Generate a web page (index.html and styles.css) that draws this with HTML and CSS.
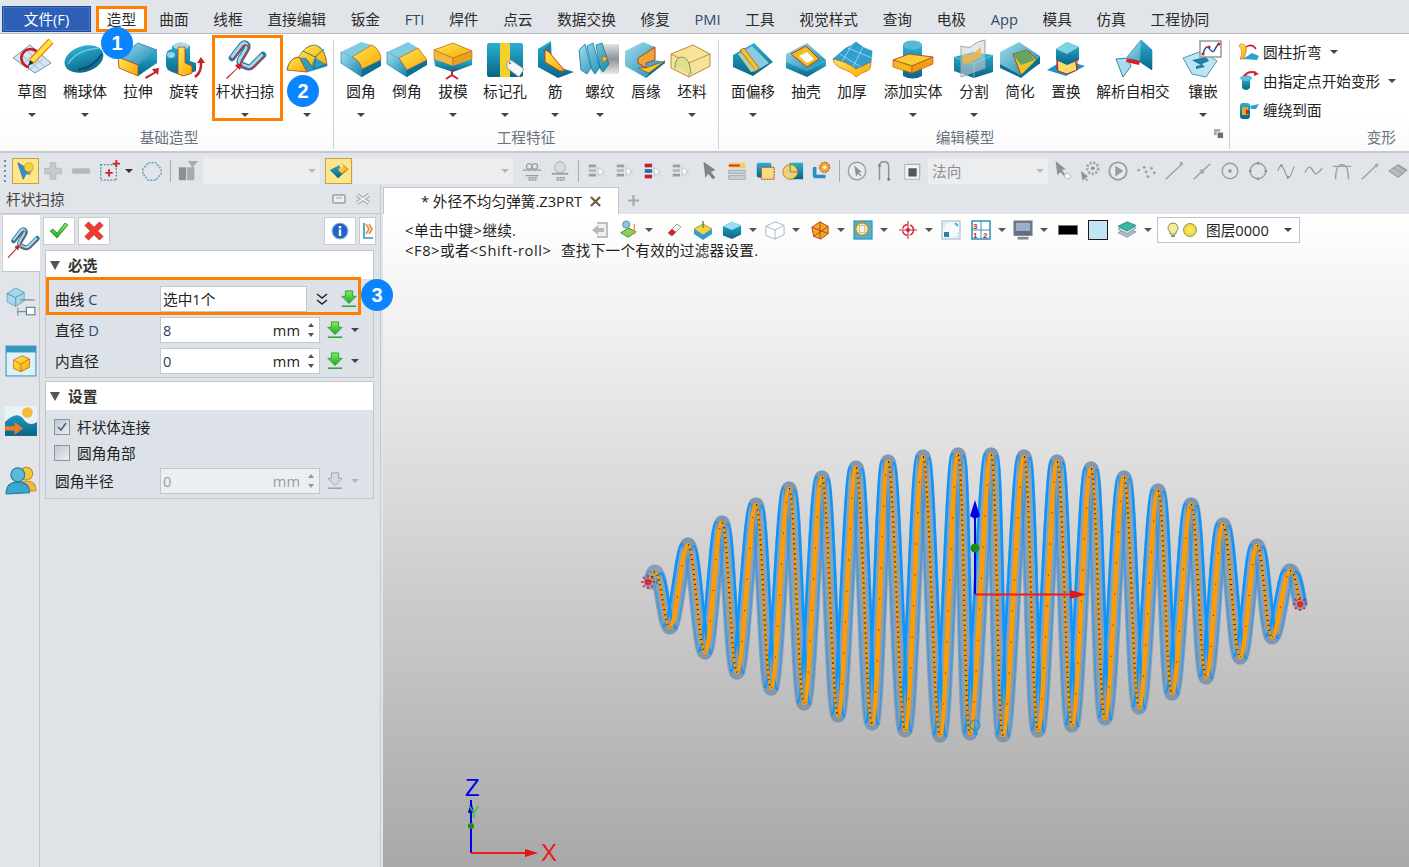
FILE: index.html
```html
<!DOCTYPE html>
<html lang="zh-CN">
<head>
<meta charset="utf-8">
<title>杆状扫掠</title>
<link rel="stylesheet" href="styles.css">
</head>
<body>
<svg class="defs" aria-hidden="true">
  <defs>
    <linearGradient id="t" x1="0" y1="0" x2="1" y2="1"><stop offset="0" stop-color="#a5deee"/><stop offset="1" stop-color="#0f86ad"/></linearGradient>
    <linearGradient id="d" x1="0" y1="0" x2="0" y2="1"><stop offset="0" stop-color="#2ab0d4"/><stop offset="1" stop-color="#0a6485"/></linearGradient>
    <linearGradient id="y" x1="0" y1="0" x2="1" y2="1"><stop offset="0" stop-color="#ffe85a"/><stop offset="1" stop-color="#f7a900"/></linearGradient>
    <linearGradient id="g" x1="0" y1="0" x2="0" y2="1"><stop offset="0" stop-color="#7df05a"/><stop offset="1" stop-color="#22a52c"/></linearGradient>
    <linearGradient id="m" x1="0" y1="0" x2="0" y2="1"><stop offset="0" stop-color="#dfe3e6"/><stop offset=".5" stop-color="#8d9296"/><stop offset="1" stop-color="#e6e8ea"/></linearGradient>
    <symbol id="gd" viewBox="0 0 20 20"><path d="M6 1h8v6h4l-8 8-8-8h4z" fill="url(#g)" stroke="#2b9a35"/><path d="M2 18h16" stroke="#2b9a35" stroke-width="1.6"/></symbol>
    <symbol id="gdo" viewBox="0 0 20 20"><path d="M6 1h8v6h4l-8 8-8-8h4z" fill="#d8dbde" stroke="#9a9ea2"/><path d="M2 18h16" stroke="#9a9ea2" stroke-width="1.6"/></symbol>
    <symbol id="lst" viewBox="0 0 24 24"><rect x="3" y="5" width="8" height="3" fill="#9a9ea2"/><rect x="3" y="10" width="8" height="3" fill="#b4b8bb"/><rect x="3" y="15" width="8" height="3" fill="#9a9ea2"/><path d="M13 8l1 9 2-2 3 3 1-1-3-3 3-1z" fill="#fff" stroke="#a9adb1" stroke-width=".7"/></symbol>
  </defs>
</svg>

<header class="menubar">
  <div class="filebtn">文件(F)</div>
  <div class="tab tab-on">造型<span class="badge b1">1</span></div>
  <div class="tab">曲面</div><div class="tab">线框</div><div class="tab">直接编辑</div><div class="tab">钣金</div>
  <div class="tab lat">FTI</div><div class="tab">焊件</div><div class="tab">点云</div><div class="tab">数据交换</div><div class="tab">修复</div>
  <div class="tab lat">PMI</div><div class="tab">工具</div><div class="tab">视觉样式</div><div class="tab">查询</div><div class="tab">电极</div>
  <div class="tab lat">App</div><div class="tab">模具</div><div class="tab">仿真</div><div class="tab">工程协同</div>
</header>

<section class="ribbon">
  <div class="grp g1">
    <div class="btns">
      <div class="rb w46"><svg class="ri" viewBox="9 38 46 44"><path d="M13 58l17-13 21 18-16 10z" fill="#d4e6f2" stroke="#6f97b3"/><path d="M19 53l20 16M25 49l19 17M20 66l16-12M27 71l16-12" stroke="#8fb3ca" fill="none" stroke-width=".8"/><path d="M37 52A9 9 0 1 0 29 67" fill="none" stroke="#c4202a" stroke-width="2.6"/><path d="M32 61l19-20" stroke="#e98c00" stroke-width="7"/><path d="M32 61l19-20" stroke="#ffdf4a" stroke-width="4.5"/><path d="M28 66l2-6 4 3z" fill="#333"/></svg><span>草图</span><i class="car"></i></div>
      <div class="rb w60"><svg class="ri" viewBox="62 38 46 44"><ellipse cx="84" cy="59" rx="20" ry="13" transform="rotate(-18 84 59)" fill="url(#d)"/><path d="M68 64Q76 50 99 48" stroke="#6cc7df" stroke-width="1.400" fill="none"/><path d="M78 70Q93 68 102 54" stroke="#0a4d68" stroke-width="2" fill="none"/></svg><span>椭球体</span><i class="car"></i></div>
      <div class="rb w46"><svg class="ri" viewBox="115 38 46 44"><path d="M118 57l20-14 19 7-19 15z" fill="url(#t)" stroke="#0b7497" stroke-width=".7"/><path d="M118 57l20 8v11l-19-8z" fill="url(#y)" stroke="#c43a1c" stroke-width=".8"/><path d="M138 65l19-15v13l-19 13z" fill="url(#d)"/><path d="M145 77l9-5-2-3 7-1-1 7-2-2-10 6z" fill="#c8202a"/></svg><span>拉伸</span></div>
      <div class="rb w46"><svg class="ri" viewBox="161 38 46 44"><path d="M166 56q0-6 6-7v-3q9-7 18 0v15l6 2v8l-13 5-11-4q-6-2-6-7z" fill="url(#d)"/><ellipse cx="181" cy="46" rx="8" ry="3.500" fill="#a3def0"/><ellipse cx="171" cy="55" rx="4" ry="3" fill="#8fd6ea"/><path d="M178 47h7v16l7 3v7l-8 3-6-2z" fill="url(#y)" stroke="#c43a1c" stroke-width=".8"/><path d="M195 77q7-5 6-15" fill="none" stroke="#c8202a" stroke-width="2.400"/><path d="M197 63l4-6 4 6z" fill="#c8202a"/></svg><span>旋转</span></div>
      <div class="rb w76"><svg class="ri" viewBox="222 38 46 44"><path d="M232 58L242 45Q245 42 247 45Q248 47 246 50L240 60Q239 63 242 65L247 67Q250 68 252 66L263 55" fill="none" stroke="#1f7ea3" stroke-width="6.500" stroke-linecap="round"/><path d="M231.500 57.500L241.500 44.500Q244.500 41.500 246.500 44.500Q247.500 46.500 245.500 49.500L239.500 59.500Q238.500 62.500 241.500 64.500L246.500 66.500Q249.500 67.500 251.500 65.500L262.500 54.500" fill="none" stroke="#9fdcec" stroke-width="3"/><path d="M233 59.500L243 46.500Q246 43.500 248 46.500Q249 48.500 247 51.500L241 61.500Q240 64.500 243 66.500L248 68.500Q251 69.500 253 67.500L264 56.500" fill="none" stroke="#d8283a" stroke-width="1.300"/><path d="M226 78l11-10-2-3 7-2-2 7-2-2-11 11z" fill="#c8202a"/></svg><span>杆状扫掠</span><i class="car"></i><b class="hl hl-sweep"></b></div>
      <div class="rb w48"><svg class="ri" viewBox="284 38 46 44"><path d="M287 70q2-12 12-13 6-12 16-12 11 2 12 21l-20 6-8-3z" fill="#2d9dc2" stroke="#1b6f90" stroke-width=".6"/><path d="M298 58q6-12 17-13 10 3 12 20l-12-7-4 9-5-9z" fill="url(#y)" stroke="#8c6b2e" stroke-width=".5"/><path d="M287 70q2-12 12-13l8 15z" fill="url(#y)" stroke="#c43a1c" stroke-width=".8"/><path d="M316 56l-2 13 13-5M307 60l7 9M303 51l12 6 9-8" fill="none" stroke="#1b6f90" stroke-width=".9"/></svg><span class="nolabel"></span><i class="car"></i><span class="badge b2">2</span></div>
    </div>
    <div class="gt">基础造型</div>
  </div>
  <i class="vsep"></i>
  <div class="grp g2">
    <div class="btns">
      <div class="rb w46"><svg class="ri" viewBox="338 38 46 44"><path d="M341 52l11 5q9 4 10 12v8l-21-14z" fill="url(#t)" stroke="#0b7497" stroke-width=".6"/><path d="M341 52l20-10 11 3-20 12z" fill="#7fcbe2"/><path d="M352 57l20-12q9 5 9 15l-19 9q-1-8-10-12z" fill="url(#y)" stroke="#c4651c" stroke-width=".8"/><path d="M362 69l19-9v6l-19 11z" fill="#0c7095"/></svg><span>圆角</span><i class="car"></i></div>
      <div class="rb w46"><svg class="ri" viewBox="384 38 46 44"><path d="M387 52l12 6 8 12v7l-20-13z" fill="url(#t)" stroke="#0b7497" stroke-width=".6"/><path d="M387 52l21-10 10 6-19 10z" fill="#7fcbe2"/><path d="M399 58l19-10 9 12-20 10z" fill="url(#y)" stroke="#c4651c" stroke-width=".8"/><path d="M407 70l20-10v5l-20 12z" fill="#0c7095"/></svg><span>倒角</span></div>
      <div class="rb w46"><svg class="ri" viewBox="430 38 46 44"><path d="M434 50l19-7 19 8-19 7z" fill="url(#y)" stroke="#c4651c" stroke-width=".8"/><path d="M434 50l19 8v8l-19-6z" fill="#f4b83a" stroke="#c4651c" stroke-width=".6"/><path d="M453 58l19-7v9l-19 6z" fill="#e8a020" stroke="#c4651c" stroke-width=".6"/><path d="M434 59l19 7 19-7v6l-19 7-18-6z" fill="url(#d)"/><path d="M452 70v5l-6 4M452 75l6 4" stroke="#c8202a" stroke-width="2" fill="none"/></svg><span>拔模</span><i class="car"></i></div>
      <div class="rb w58"><svg class="ri" viewBox="482 38 46 44"><rect x="487" y="43" width="36" height="34" rx="2" fill="url(#d)"/><rect x="500" y="43" width="10" height="34" fill="#f5cf2a"/><path d="M507 62l4-2 13 9-5 8-12-9z" fill="#f4f6f7" stroke="#8a9096" stroke-width=".8"/><circle cx="510" cy="63" r="1" fill="#666"/></svg><span>标记孔</span><i class="car"></i></div>
      <div class="rb w42"><svg class="ri" viewBox="532 38 46 44"><path d="M538 49l13-8 1 24 22 7-16 6-20-11z" fill="url(#d)"/><path d="M543 50l8-7v24z" fill="#1e7f9f"/><path d="M545 50l4 2 16 19h-5l-15-9z" fill="url(#y)" stroke="#c4451c"/></svg><span>筋</span><i class="car"></i></div>
      <div class="rb w48"><svg class="ri" viewBox="577 38 46 44"><rect x="600" y="44" width="19" height="30" fill="url(#m)"/><path d="M579 50l6-6 6 24-4 6-6-4zM587 46l6-3 7 24-5 7-3-4zM596 45l6-2 7 21-6 8-3-4z" fill="url(#t)" stroke="#0f7aa0" stroke-width=".8"/><path d="M602 56l6 2-5 5z" fill="#f6c01e" stroke="#c4451c" stroke-width=".6"/></svg><span>螺纹</span><i class="car"></i></div>
      <div class="rb w44"><svg class="ri" viewBox="623 38 46 44"><path d="M625 51l18-9 12 5-1 13 11 2-19 16-21-12z" fill="url(#t)"/><path d="M638 58l17-11v13l-9 3v5l-8-5z" fill="#e8a53a" stroke="#b3400f"/><path d="M646 68l19-7-16 12-11-5z" fill="url(#y)" stroke="#b3400f" stroke-width=".7"/><path d="M646 78l19-15v-2l-16 12z" fill="#0c7095"/></svg><span>唇缘</span></div>
      <div class="rb w48"><svg class="ri" viewBox="669 38 46 44"><path d="M671 54l22-9 17 9v12l-21 11-18-9z" fill="#f5e39a" stroke="#b8893c"/><path d="M671 54l18 9 21-9M689 63v14" fill="none" stroke="#b8893c" stroke-width=".9"/><path d="M675 68q0-11 7-11 8 1 9 17" fill="#e3df90" stroke="#7d9a5a"/></svg><span>坯料</span><i class="car"></i></div>
    </div>
    <div class="gt">工程特征</div>
  </div>
  <i class="vsep"></i>
  <div class="grp g3">
    <div class="btns">
      <div class="rb w60"><svg class="ri" viewBox="730 38 46 44"><path d="M733 55l21-12 19 19-20 14-20-9z" fill="url(#d)"/><path d="M738 54l14-8 17 17-13 8z" fill="#8ccbdf"/><path d="M740 50l16 21 3-3-15-20z" fill="#f2c62a" stroke="#b3400f" stroke-width=".7"/><path d="M738 54l3-1 15 18-5 1z" fill="#b8cf9a"/></svg><span>面偏移</span><i class="car"></i></div>
      <div class="rb w46"><svg class="ri" viewBox="783 38 46 44"><path d="M786 54l21-11 19 17-19 11-21-8z" fill="url(#t)"/><path d="M791 54l15-8 13 13-12 8z" fill="#f3bc24" stroke="#b3400f"/><path d="M799 56l8-4 7 7-7 4z" fill="#fff"/><path d="M786 62l21 9 19-11v6l-19 11-21-9z" fill="url(#d)"/></svg><span>抽壳</span></div>
      <div class="rb w46"><svg class="ri" viewBox="829 38 46 44"><path d="M833 59q7-6 13-11 7-3 10-6 8 7 16 9l-1 11q-7 4-15 7-9-7-23-10z" fill="#2f9fd0" stroke="#1a789e" stroke-width=".6"/><path d="M840 54l24 15M848 48l24 10M853 43l-12 20M863 47l-10 20" stroke="#bfe3f0" stroke-width=".7" fill="none"/><path d="M833 59q14 3 23 10 8-3 15-7 0 8-4 9-6 2-11 6-4-5-13-8-9-3-10-10z" fill="url(#y)" stroke="#c4651c" stroke-width=".7"/></svg><span>加厚</span></div>
      <div class="rb w76"><svg class="ri" viewBox="890 38 46 44"><path d="M903 45v31q10 5 19 0V45z" fill="url(#d)"/><ellipse cx="912.500" cy="45" rx="9.500" ry="4.500" fill="#58b8d5"/><path d="M893 60l16-6 24 3-21 9z" fill="#f5cf35" stroke="#c04a22"/><path d="M893 60l19 6v7l-19-6z" fill="#f7b716" stroke="#c04a22" stroke-width=".7"/><path d="M912 66l21-9v7l-21 9z" fill="#ee9e12" stroke="#c04a22" stroke-width=".7"/></svg><span>添加实体</span><i class="car"></i></div>
      <div class="rb w46"><svg class="ri" viewBox="951 38 46 44"><path d="M954 57l19-5 20 3v17l-19 6-20-7z" fill="url(#d)"/><path d="M954 57l19 7 20-9M974 64v14" stroke="#7dcbe2" fill="none" stroke-width=".8"/><path d="M961 46q10 3 12-1 5-4 12-5v28l-24 9z" fill="#cfd6d8" fill-opacity=".55" stroke="#9aa3a8"/><path d="M963 54q7 3 11-1l7-6v9l-9 6-9 3z" fill="#f6b63c" fill-opacity=".85"/></svg><span>分割</span><i class="car"></i></div>
      <div class="rb w46"><svg class="ri" viewBox="997 38 46 44"><path d="M1000 52l19-10 21 14-19 19-21-11z" fill="url(#t)"/><path d="M1013 54l14-4 13 13-19 12z" fill="#f2c22a" stroke="#b3400f"/><path d="M1013 54l14-4 8 10-14 5z" fill="#64a65f"/><path d="M1000 64l21 11 19-19v7l-19 15-21-10z" fill="#0c7095"/></svg><span>简化</span></div>
      <div class="rb w46"><svg class="ri" viewBox="1043 38 46 44"><path d="M1047 70l17-10 21 6-19 10z" fill="#1d93bf"/><path d="M1057 61l18-3 2 12-10 4-9-3z" fill="#f7dc68" stroke="#c8202a"/><path d="M1056 49l11-7 12 5v13l-12 5-11-5z" fill="url(#d)"/><path d="M1056 49l11 5 12-7-12-5z" fill="#7fd1e6"/><path d="M1057 60v10M1077 59v11" stroke="#c8202a"/></svg><span>置换</span></div>
      <div class="rb w88"><svg class="ri" viewBox="1110 38 46 44"><path d="M1116 59l11-1 4 8-8 11z" fill="#a9dcec" stroke="#2a86a8"/><path d="M1127 57l14-17 11 10v20l-12-8z" fill="url(#t)" stroke="#0f7aa0" stroke-width=".6"/><path d="M1141 40l11 10v20l-12-8z" fill="url(#d)"/><path d="M1127 58l13 3-1 4-13-3z" fill="#d8202a"/></svg><span>解析自相交</span></div>
      <div class="rb w52"><svg class="ri" viewBox="1180 38 46 44"><path d="M1183 58l19-7 15 10-11 16-14-3z" fill="#bfe3f0" stroke="#3c9dc4"/><path d="M1192 60l14-3 3 4-7 3 3 3-9 2v-3l5-1-6-3z" fill="#1b7fa6"/><rect x="1200" y="41" width="21" height="16" fill="#fff" stroke="#8d9296" stroke-width="1.400"/><path d="M1203 54q3-10 6-6 3 5 5 3 2-4 5-8" stroke="#1a4c9a" stroke-width="1.400" fill="none"/><circle cx="1203" cy="54" r="1.600" fill="#c8202a"/><circle cx="1209" cy="47" r="1.600" fill="#c8202a"/><circle cx="1219" cy="44" r="1.600" fill="#c8202a"/></svg><span>镶嵌</span><i class="car"></i></div>
    </div>
    <div class="gt gt3">编辑模型<svg class="launch" viewBox="0 0 12 12"><path d="M1 1h7v3H4v4H1z" fill="#a9adb1"/><path d="M5 5h6v6H5z" fill="#6b7075"/></svg></div>
  </div>
  <i class="vsep"></i>
  <div class="grp g4">
    <div class="srow"><svg class="si" viewBox="0 0 22 22"><path d="M2 3q8 0 6 8l-2 7H2q4-8-1-13z" fill="url(#y)" stroke="#c4651c" stroke-width=".6"/><path d="M5 18l9-6 7 3-2 4z" fill="#2ba3cc"/><path d="M8 6q6-4 10 2" stroke="#c8202a" fill="none" stroke-width="1.500"/></svg><span>圆柱折弯</span><i class="car sc1"></i></div>
    <div class="srow"><svg class="si" viewBox="0 0 22 22"><path d="M4 8v10q4 4 8 0V8z" fill="url(#d)"/><ellipse cx="8" cy="8" rx="6" ry="3" fill="#63bcd8"/><path d="M6 6q5-6 12-3" stroke="#d0232c" fill="none" stroke-width="2"/><path d="M16 1l5 3-5 2z" fill="#d0232c"/></svg><span>由指定点开始变形</span><i class="car sc1"></i></div>
    <div class="srow"><svg class="si" viewBox="0 0 22 22"><rect x="2" y="4" width="10" height="16" rx="3" fill="url(#d)"/><rect x="4" y="8" width="6" height="8" fill="#e6a82a"/><path d="M8 10l4 3-4 3z" fill="#c8202a"/><path d="M12 7l9-2-3 5h-5z" fill="#2ba3cc"/></svg><span>缠绕到面</span></div>
    <div class="gt gt4">变形</div>
  </div>
</section>

<section class="filterbar">
  <i class="grip"></i>
  <div class="fsel"><svg viewBox="0 0 24 24"><path d="M3 3l6 18 3-6 6-3z" fill="#2e8fd2" stroke="#1c5f9a" stroke-width=".7"/><circle cx="15" cy="8" r="5" fill="#f3d13a" stroke="#b98e1f" stroke-width=".7"/><rect x="13" y="13" width="4" height="3" fill="#888"/></svg></div>
  <div class="fc w28"><svg viewBox="0 0 24 24"><path d="M9 3h6v6h6v6h-6v6H9v-6H3V9h6z" fill="#c6cacd" stroke="#b1b5b8"/></svg></div>
  <div class="fc w28"><svg viewBox="0 0 24 24"><rect x="2" y="9" width="20" height="6" rx="2" fill="#b5b9bc"/></svg></div>
  <div class="fc w28"><svg viewBox="0 0 24 24"><rect x="3" y="5" width="17" height="17" fill="none" stroke="#4f90a8" stroke-width="1.500" stroke-dasharray="2 1.500"/><path d="M8 14h8M12 10v8" stroke="#d8202a" stroke-width="2"/><path d="M16 4h8M20 0v8" stroke="#d8202a" stroke-width="2"/></svg></div>
  <i class="car fcar"></i>
  <div class="fc w28 dotc"><svg viewBox="0 0 24 24"><path d="M8 3h8l6 7v5l-6 7H8l-6-7v-5z" fill="none" stroke="#62a4bd" stroke-width="1.800" stroke-dasharray="2 1.500"/></svg></div>
  <i class="tsep s1"></i>
  <div class="fc w24"><svg viewBox="0 0 24 24"><rect x="2" y="8" width="8" height="14" fill="#8b9094"/><rect x="11" y="8" width="8" height="14" fill="#a6aaad"/><path d="M12 1h11l-5 6v6h-2V7z" fill="#a7abaf"/></svg></div>
  <div class="field f1"><i class="car gcar"></i></div>
  <div class="fsel sel2"><svg viewBox="0 0 24 24"><path d="M2 11l13-7 7 6-11 10z" fill="url(#d)"/><path d="M11 11l4-7 7 6-7 5z" fill="url(#y)" stroke="#c4651c" stroke-width=".7"/><path d="M12 5h5l-3 3z" fill="#fff"/></svg></div>
  <div class="field f2"><i class="car gcar"></i></div>
  <div class="fc w28"><svg viewBox="0 0 24 24"><path d="M2 11h20M5 17h14" stroke="#9a9ea2" stroke-width="1.500"/><circle cx="9" cy="7" r="3" fill="none" stroke="#9a9ea2" stroke-width="1.300"/><circle cx="15" cy="7" r="3" fill="none" stroke="#9a9ea2" stroke-width="1.300"/><text x="8" y="23" class="tiny">REF</text></svg></div>
  <div class="fc w28"><svg viewBox="0 0 24 24"><circle cx="12" cy="8" r="6" fill="#d8dbde" stroke="#a6aaad"/><path d="M3 15h18" stroke="#9a9ea2" stroke-width="2"/><text x="8" y="23" class="tiny">REF</text></svg></div>
  <i class="tsep s2"></i>
  <div class="fc w28"><svg viewBox="0 0 24 24"><use href="#lst"/></svg></div>
  <div class="fc w28"><svg viewBox="0 0 24 24"><use href="#lst"/></svg></div>
  <div class="fc w28"><svg viewBox="0 0 24 24"><rect x="3" y="4" width="8" height="4" fill="#c8202a"/><rect x="3" y="10" width="8" height="4" fill="#1f6fb0"/><rect x="3" y="16" width="8" height="4" fill="#c8202a"/><path d="M13 8l1 9 2-2 3 3 1-1-3-3 3-1z" fill="#fff" stroke="#a9adb1" stroke-width=".7"/></svg></div>
  <div class="fc w28"><svg viewBox="0 0 24 24"><use href="#lst"/></svg></div>
  <div class="fc w28"><svg viewBox="0 0 24 24"><path d="M6 2l2 18 3-5 5 6 3-2-5-6 5-2z" fill="#7d8388"/></svg></div>
  <div class="fc w28"><svg viewBox="0 0 24 24"><rect x="3" y="3" width="18" height="6" fill="#f6cf5a"/><path d="M3 6h12" stroke="#d0232c" stroke-width="2"/><rect x="3" y="11" width="18" height="4" fill="#c4cdd2" stroke="#88939a" stroke-width=".6"/><rect x="3" y="17" width="18" height="4" fill="#c4cdd2" stroke="#88939a" stroke-width=".6"/></svg></div>
  <div class="fc w28"><svg viewBox="0 0 24 24"><rect x="3" y="3" width="16" height="16" rx="2" fill="url(#d)"/><rect x="8" y="8" width="14" height="13" fill="#f6dc7a" stroke="#c8202a" stroke-dasharray="2 1"/></svg></div>
  <div class="fc w28"><svg viewBox="0 0 24 24"><rect x="8" y="3" width="15" height="18" fill="url(#d)"/><circle cx="9" cy="13" r="8" fill="#f4cf78" stroke="#b3802b"/><path d="M9 13V5M9 13h8" stroke="#7fa04f" stroke-width="1.500"/></svg></div>
  <div class="fc w28"><svg viewBox="0 0 24 24"><path d="M3 10q0-4 4-2v8h10v4H6q-3 0-3-3z" fill="#2b8fc4"/><circle cx="16" cy="8" r="5.500" fill="#f1a92a" stroke="#c8202a" stroke-dasharray="2 1"/><circle cx="16" cy="8" r="2" fill="#fff"/></svg></div>
  <i class="tsep s3"></i>
  <div class="fc w28"><svg viewBox="0 0 24 24"><circle cx="12" cy="12" r="9.500" fill="#e8eaec" stroke="#9a9ea2" stroke-width="1.500"/><path d="M9 6l2 12 2-3 3 3 1-1-3-3 3-1z" fill="#8b9094"/></svg></div>
  <div class="fc w28"><svg viewBox="0 0 24 24"><path d="M6 22V6q0-4 5-4 5 0 5 5v15" fill="none" stroke="#8d9296" stroke-width="1.600"/><circle cx="6" cy="6" r="1.500" fill="#777"/><circle cx="16" cy="21" r="1.500" fill="#777"/></svg></div>
  <div class="fc w28"><svg viewBox="0 0 24 24"><rect x="5" y="3" width="16" height="16" fill="#c9ccce" stroke="#e8eaec"/><rect x="3" y="5" width="16" height="16" fill="#f1f2f3" stroke="#aeb2b5"/><rect x="7" y="9" width="9" height="9" fill="#55595c"/></svg></div>
  <div class="field f3">法向<i class="car gcar"></i></div>
  <div class="fc w28"><svg viewBox="0 0 24 24"><path d="M5 1l2 16 3-4 5 5 1-1-4-6 4-1z" fill="#8b9094"/><path d="M14 17l4-3 4 4-4 3z" fill="#fff" stroke="#a9adb1"/></svg></div>
  <div class="fc w28"><svg viewBox="0 0 24 24"><circle cx="15" cy="9" r="6" fill="none" stroke="#a3a7aa" stroke-width="3" stroke-dasharray="2.500 1.500"/><circle cx="15" cy="9" r="2" fill="#8b9094"/><path d="M2 12l2 11 2-3 3 3 1-1-3-3 3-1z" fill="#8b9094"/></svg></div>
  <div class="fc w28"><svg viewBox="0 0 24 24"><circle cx="12" cy="12" r="9.500" fill="#e8eaec" stroke="#9a9ea2" stroke-width="2"/><path d="M9 6v12l9-6z" fill="#9a9ea2"/></svg></div>
  <div class="fc w28"><svg viewBox="0 0 24 24" fill="#9a9ea2"><circle cx="4" cy="11" r="1.500"/><circle cx="10" cy="8" r="1.500"/><circle cx="12" cy="13" r="1.500"/><circle cx="18" cy="9" r="1.500"/><circle cx="21" cy="14" r="1.500"/><circle cx="14" cy="18" r="1.500"/></svg></div>
  <div class="fc w28"><svg viewBox="0 0 24 24"><path d="M3 21L21 4" stroke="#9a9ea2" stroke-width="1.400"/><circle cx="20" cy="4" r="2" fill="#a7abaf"/></svg></div>
  <div class="fc w28"><svg viewBox="0 0 24 24"><path d="M3 21L21 4" stroke="#9a9ea2" stroke-width="1.400"/><circle cx="12" cy="12.500" r="2.500" fill="#a7abaf"/></svg></div>
  <div class="fc w28"><svg viewBox="0 0 24 24"><circle cx="12" cy="12" r="8.500" fill="none" stroke="#9a9ea2" stroke-width="1.500"/><circle cx="12" cy="12" r="1.800" fill="#8b9094"/></svg></div>
  <div class="fc w28"><svg viewBox="0 0 24 24"><circle cx="12" cy="12" r="8.500" fill="none" stroke="#9a9ea2" stroke-width="1.500"/><circle cx="12" cy="3.500" r="1.500" fill="#8b9094"/><circle cx="3.500" cy="12" r="1.500" fill="#8b9094"/><circle cx="20.500" cy="12" r="1.500" fill="#8b9094"/><circle cx="12" cy="20.500" r="1.500" fill="#8b9094"/></svg></div>
  <div class="fc w28"><svg viewBox="0 0 24 24"><path d="M3 12q3-8 5-5t4 9q3 5 5 1t4-10" fill="none" stroke="#9a9ea2" stroke-width="1.300"/><circle cx="7" cy="6" r="1.400" fill="#8b9094"/><circle cx="14" cy="19" r="1.400" fill="#8b9094"/></svg></div>
  <div class="fc w28"><svg viewBox="0 0 24 24"><path d="M2 14q4-9 7-5t4 6 8-6" fill="none" stroke="#9a9ea2" stroke-width="1.500"/></svg></div>
  <div class="fc w28"><svg viewBox="0 0 24 24"><path d="M5 21Q5 5 12 5t7 16M2 7h20" fill="none" stroke="#9a9ea2" stroke-width="1.500"/></svg></div>
  <div class="fc w28"><svg viewBox="0 0 24 24"><path d="M3 21L21 4" stroke="#9a9ea2" stroke-width="1.400"/><circle cx="19" cy="6" r="2" fill="#a7abaf"/><path d="M17 12l2 2" stroke="#9a9ea2"/></svg></div>
  <div class="fc w28"><svg viewBox="0 0 24 24"><path d="M2 12l10-7 10 6-10 8z" fill="#b7bbbe" stroke="#8b9094"/><path d="M7 8l10 7M12 6l8 6" stroke="#8b9094"/></svg></div>
</section>

<main class="work">
  <aside class="panel">
    <div class="phead"><span class="ptitle">杆状扫掠</span><svg class="pi1" viewBox="0 0 14 12"><rect x="1" y="2" width="12" height="8" rx="1" fill="#eef0f2" stroke="#9a9ea2" stroke-width="1.500"/><path d="M4 5h6" stroke="#9a9ea2"/></svg><svg class="pi2" viewBox="0 0 16 12"><path d="M2 2l12 8M14 2L2 10" stroke="#a9adb1" stroke-width="4"/><path d="M2 2l12 8M14 2L2 10" stroke="#eef0f2" stroke-width="1.600"/></svg></div>
    <div class="pbody">
      <nav class="strip">
        <div class="st on"><svg viewBox="222 40 42 42"><path d="M232 58L242 45Q245 42 247 45Q248 47 246 50L240 60Q239 63 242 65L247 67Q250 68 252 66L263 55" fill="none" stroke="#1f7ea3" stroke-width="6.500" stroke-linecap="round"/><path d="M231.500 57.500L241.500 44.500Q244.500 41.500 246.500 44.500Q247.500 46.500 245.500 49.500L239.500 59.500Q238.500 62.500 241.500 64.500L246.500 66.500Q249.500 67.500 251.500 65.500L262.500 54.500" fill="none" stroke="#9fdcec" stroke-width="3"/><path d="M233 59.500L243 46.500Q246 43.500 248 46.500Q249 48.500 247 51.500L241 61.500Q240 64.500 243 66.500L248 68.500Q251 69.500 253 67.500L264 56.500" fill="none" stroke="#d8283a" stroke-width="1.300"/><path d="M224 80l11-12-2-2 7-3-2 8-2-2-11 12z" fill="#c8202a"/></svg></div>
        <div class="st"><svg viewBox="0 0 30 30"><path d="M2 7l8-5 8 4v8l-8 5-8-4z" fill="#a7d7ea" stroke="#7fb0c6"/><path d="M2 7l8 4 8-5M10 11v8" stroke="#5f9eb8" fill="none"/><path d="M14 13h14M12 20v8M12 24h8" stroke="#7c8a94" fill="none"/><rect x="20" y="20" width="8" height="7" fill="#fff" stroke="#5f7688"/></svg></div>
        <div class="st"><svg viewBox="0 0 30 30"><rect x="1" y="1" width="28" height="28" fill="#dff1f7" stroke="#3798bd"/><rect x="1" y="1" width="28" height="6" fill="#3798bd"/><path d="M8 14l8-4 7 3v8l-8 4-7-3z" fill="url(#y)" stroke="#c4651c" stroke-width=".7"/><path d="M8 14l7 4 8-5M15 18v7" stroke="#c4651c" fill="none" stroke-width=".7"/></svg></div>
        <div class="st"><svg viewBox="0 0 30 30"><rect x="0" y="1" width="30" height="28" fill="url(#d)"/><path d="M0 1h30v15q-7 5-13-3T0 16z" fill="#e8f3f8"/><circle cx="21" cy="7" r="5" fill="#f6b93a"/><path d="M0 20h9v-4l8 6-8 6v-4H0z" fill="#f17a2a"/></svg></div>
        <div class="st"><svg viewBox="0 0 30 30"><circle cx="20" cy="9" r="6" fill="#f4c63c" stroke="#c88b1c"/><path d="M9 26q2-10 11-10t9 9z" fill="#f4b63c" stroke="#c88b1c"/><circle cx="12" cy="10" r="6.500" fill="#5db8da" stroke="#1f7ea3"/><path d="M1 28q0-11 11-11t11 10z" fill="#3aa7cf" stroke="#1f7ea3"/></svg></div>
      </nav>
      <div class="pcontent">
        <div class="ptools">
          <div class="tb"><svg viewBox="0 0 22 18"><path d="M2 9l7 7L20 3l-3-2-8 10-4-4z" fill="url(#g)" stroke="#28902f" stroke-width=".8"/></svg></div>
          <div class="tb"><svg viewBox="0 0 22 22"><path d="M5 1l6 6 6-6 4 4-6 6 6 6-4 4-6-6-6 6-4-4 6-6-6-6z" fill="#ee3b30" stroke="#b8241c" stroke-width=".8"/></svg></div>
          <div class="tb tb-info"><svg viewBox="0 0 18 18"><circle cx="9" cy="9" r="8" fill="#1e63c8" stroke="#9fb9de" stroke-width="1.200"/><rect x="7.800" y="7.500" width="2.400" height="6.500" fill="#fff"/><rect x="7.800" y="4" width="2.400" height="2.400" fill="#fff"/></svg></div>
          <div class="tb tb-nar"><svg viewBox="0 0 12 18"><path d="M2 1v15h9" fill="none" stroke="#2b96c8" stroke-width="1.600"/><path d="M4 2l3 5-3 5M7 2l3 5-3 5" fill="none" stroke="#ea9340" stroke-width="1.800"/></svg></div>
        </div>

        <div class="sec">
          <div class="sh"><i class="tri"></i>必选</div>
          <div class="sb">
            <div class="row row-c">
              <label>曲线 <em>C</em></label>
              <div class="inp i147">选中1个</div>
              <svg class="chev" viewBox="0 0 14 14"><path d="M2 2l5 4 5-4M2 8l5 4 5-4" fill="none" stroke="#222" stroke-width="1.500"/></svg>
              <svg class="gd g-c"><use href="#gd"/></svg>
              <b class="hl hl-row"></b>
              <span class="badge b3">3</span>
            </div>
            <div class="row">
              <label>直径 <em>D</em></label>
              <div class="inp i160"><em class="v">8</em><span class="unit">mm</span><span class="spin"><i></i><i></i></span></div>
              <svg class="gd"><use href="#gd"/></svg><i class="car rc"></i>
            </div>
            <div class="row">
              <label>内直径</label>
              <div class="inp i160"><em class="v">0</em><span class="unit">mm</span><span class="spin"><i></i><i></i></span></div>
              <svg class="gd"><use href="#gd"/></svg><i class="car rc"></i>
            </div>
          </div>
        </div>

        <div class="sec">
          <div class="sh"><i class="tri"></i>设置</div>
          <div class="sb sb2">
            <div class="crow"><i class="cb"><svg viewBox="0 0 12 12"><path d="M2 6l3 3 5-7" fill="none" stroke="#44648a" stroke-width="1.600"/></svg></i>杆状体连接</div>
            <div class="crow"><i class="cb"></i>圆角角部</div>
            <div class="row dis">
              <label>圆角半径</label>
              <div class="inp i160"><em class="v">0</em><span class="unit">mm</span><span class="spin"><i></i><i></i></span></div>
              <svg class="gd"><use href="#gdo"/></svg><i class="car rc"></i>
            </div>
          </div>
        </div>
      </div>
    </div>
  </aside>

  <div class="main">
    <div class="doctabs">
      <div class="doctab">* 外径不均匀弹簧.Z3PRT<svg viewBox="0 0 12 12"><path d="M1 1l10 10M11 1L1 11" stroke="#6b5d3f" stroke-width="2.400"/></svg></div>
      <svg class="plus" viewBox="0 0 14 14"><path d="M7 1v12M1 7h12" stroke="#a7abaf" stroke-width="2.400"/></svg>
    </div>
    <div class="view">
      <svg class="scene" viewBox="383 214 1026 653" aria-hidden="true">
        <defs>
          <path id="dn" d="M651 582C652 574 654 572 655 572C661 572 664 627 670 627M688 545C694 545 699 652 705 652M722 523C728 523 731 672 737 672M756 505C762 505 765 688 771 688M789 489C795 489 798 703 804 703M822 478C828 478 832 715 838 715M856 468C862 468 866 723 872 723M888 462C894 462 899 730 905 730M923 457C929 457 934 735 940 735M958 455C964 455 964 733 970 733M991 455C997 455 997 735 1003 735M1024 457C1030 457 1032 730 1038 730M1057 462C1063 462 1066 725 1072 725M1091 469C1097 469 1099 718 1105 718M1124 478C1130 478 1133 707 1139 707M1158 491C1164 491 1166 693 1172 693M1191 505C1197 505 1200 677 1206 677M1223 525C1229 525 1234 657 1240 657M1257 546C1263 546 1266 637 1272 637M1290 571C1295 571 1297 590 1300 603"/>
          <path id="up" d="M670 627C676 627 682 545 688 545M705 652C711 652 716 523 722 523M737 672C743 672 750 505 756 505M771 688C777 688 783 489 789 489M804 703C810 703 816 478 822 478M838 715C844 715 850 468 856 468M872 723C878 723 882 462 888 462M905 730C911 730 917 457 923 457M940 735C946 735 952 455 958 455M970 733C976 733 985 455 991 455M1003 735C1009 735 1018 457 1024 457M1038 730C1044 730 1051 462 1057 462M1072 725C1078 725 1085 469 1091 469M1105 718C1111 718 1118 478 1124 478M1139 707C1145 707 1152 491 1158 491M1172 693C1178 693 1185 505 1191 505M1206 677C1212 677 1217 525 1223 525M1240 657C1246 657 1251 546 1257 546M1272 637C1278 637 1284 571 1290 571"/>
        </defs>
        <g class="sp-gray"><use href="#dn"/><use href="#up"/></g>
        <g class="sp-blue2"><use href="#dn" x="-5.500" y="-1"/><use href="#up" x="5.500" y="1"/></g>
        <g class="sp-blue"><use href="#dn" x="6" y="1"/><use href="#up" x="-6" y="-1"/></g>
        <use href="#up" class="sp-oup"/>
        <use href="#dn" class="sp-odn"/>
        <use href="#dn" class="sp-dot"/>
        <use href="#up" class="sp-dot2"/>
        <circle cx="975" cy="725" r="5" class="ring"/>
        <g class="star"><path d="M641 582h14M648 575v14M643 577l10 10M653 577l-10 10"/><path d="M1293 604h14M1300 597v14M1295 599l10 10M1305 599l-10 10"/></g>
        <path d="M975 594V512" stroke="#0000e6" stroke-width="2"/>
        <path d="M975 500l-5 16 5 3 5-3z" fill="#0000e6"/>
        <circle cx="975" cy="548" r="4.500" fill="#1c8a1c"/>
        <path d="M975 594.500H1070" stroke="#f01818" stroke-width="2"/>
        <path d="M1070 590v9l16-4.500z" fill="#e01515"/>
        <path d="M471 853V800" stroke="#0000f0" stroke-width="2"/>
        <path d="M471 800l-3 13h6z" fill="#0000f0"/>
        <circle cx="471" cy="826" r="3" fill="#1c8a1c"/>
        <path d="M471 853H525" stroke="#f01818" stroke-width="2"/>
        <path d="M525 849v8l13-4z" fill="#e01515"/>
        <text x="465" y="796" class="ax ax-z">Z</text>
        <text x="468" y="818" class="ax ax-y">Y</text>
        <text x="541" y="861" class="ax ax-x">X</text>
      </svg>
      <div class="prompt">
        <p><span class="lt">&lt;</span>单击中键<span class="lt">&gt;</span>继续.</p>
        <p><span class="lt">&lt;F8&gt;</span>或者<span class="lt lt2">&lt;Shift-roll&gt;&nbsp;</span>查找下一个有效的过滤器设置.</p>
      </div>
      <div class="vbar">
        <div class="vc w29"><svg viewBox="0 0 20 20"><path d="M7 3h10v14H7" fill="#eef0f1" stroke="#a9adb1" stroke-width="1.500"/><path d="M2 10l6-5v3h6v4H8v3z" fill="#b5b9bc"/></svg></div>
        <div class="vc w21 ml3"><svg viewBox="0 0 22 22"><circle cx="9" cy="5" r="4" fill="#8cc4dc" stroke="#5d8ca3"/><path d="M3 14l9-5 8 4-9 6z" fill="#8bcf5a" stroke="#3a8a2a"/><path d="M18 4v12" stroke="#e0a040" stroke-width="1.600"/></svg></div><i class="car vcar"></i>
        <div class="vc w29 ml7"><svg viewBox="0 0 20 20"><path d="M4 13L13 4l4 3-9 9z" fill="#f2f2f2" stroke="#a0a4a8"/><path d="M4 13l4-4 4 3-4 4z" fill="#d0232c"/></svg></div>
        <div class="vc w29"><svg viewBox="0 0 20 20"><path d="M1 9l9-5 9 5-9 6z" fill="#f6d24a" stroke="#c4951c"/><path d="M1 9l9 6v5l-9-6zM19 9l-9 6v5l9-6z" fill="#2ba3cc"/><path d="M10 1v7" stroke="#3a9a3a" stroke-width="1.400"/></svg></div>
        <div class="vc w21 ml4"><svg viewBox="0 0 22 22"><path d="M1 7l10-5 10 4v10l-10 5-10-4z" fill="url(#d)"/><path d="M1 7l10 4 10-5-10-4z" fill="#9cdcee"/></svg></div><i class="car vcar"></i>
        <div class="vc w21 ml8"><svg viewBox="0 0 22 22"><path d="M1 7l10-5 10 4v10l-10 5-10-4z" fill="#fff" stroke="#9ab2c0"/><path d="M1 7l10 4 10-5M11 11v10" fill="none" stroke="#9ab2c0"/></svg></div><i class="car vcar"></i>
        <div class="vc w21 ml10"><svg viewBox="0 0 22 22"><path d="M2 8l9-6 9 5v8l-8 6-8-3z" fill="#f2a52a" stroke="#b3400f"/><path d="M11 2v19M2 8l18 7M20 7L4 18" stroke="#b3400f" fill="none"/></svg></div><i class="car vcar"></i>
        <div class="vc w21 ml8"><svg viewBox="0 0 22 22"><rect x="1" y="1" width="20" height="20" fill="#4bb3d6" stroke="#2b86a8"/><circle cx="10" cy="10" r="7" fill="#f8e9a0" stroke="#b98e1f" stroke-width="1.600"/><rect x="7" y="6" width="6" height="8" fill="#eef2f4" stroke="#9aa3a8" stroke-width=".6"/></svg></div><i class="car vcar"></i>
        <div class="vc w21 ml10"><svg viewBox="0 0 22 22"><circle cx="11" cy="11" r="6" fill="none" stroke="#d0232c" stroke-width="1.600" stroke-dasharray="7 3"/><path d="M11 1v20M1 11h20" stroke="#d0232c" stroke-width="1.200"/><circle cx="11" cy="11" r="2.200" fill="#d0232c"/></svg></div><i class="car vcar"></i>
        <div class="vc w21 ml8"><svg viewBox="0 0 20 20"><rect x="1" y="1" width="18" height="18" fill="#f7fafb" stroke="#8fb6c6"/><path d="M3 8V3h5M17 12v5h-5" fill="none" stroke="#bcd" stroke-dasharray="2 1"/><rect x="3" y="12" width="5" height="5" fill="#2b7fa8"/><path d="M14 3l3 3" stroke="#4bb3d6" stroke-width="2"/></svg></div>
        <div class="vc w21 ml9"><svg viewBox="0 0 20 20"><rect x="1" y="1" width="18" height="18" fill="#fff" stroke="#3798bd" stroke-width="1.600"/><path d="M10 1v18M1 10h18" stroke="#3798bd"/><text x="2" y="9" class="tn">3</text><text x="2" y="18" class="tn">1</text><text x="12" y="18" class="tn">2</text></svg></div><i class="car vcar"></i>
        <div class="vc w21 ml7"><svg viewBox="0 0 22 22"><rect x="1" y="1" width="20" height="16" fill="#5c6e88" stroke="#888"/><rect x="3" y="3" width="16" height="9" fill="#9eafc4"/><path d="M5 20h12" stroke="#8a8a8a" stroke-width="3"/></svg></div><i class="car vcar"></i>
        <i class="cswatch black"></i>
        <i class="cswatch blue"></i>
        <div class="vc w21 ml8h"><svg viewBox="0 0 22 22"><path d="M1 14l10-5 10 4-10 6z" fill="#aebec8" stroke="#8b9aa3"/><path d="M1 10l10-5 10 4-10 6z" fill="#d3dde2" stroke="#8b9aa3"/><path d="M1 7l10-5 10 4-10 6z" fill="#3db5a4" stroke="#2a8e80"/></svg></div><i class="car vcar"></i>
        <div class="layer"><svg class="bulb" viewBox="0 0 12 16"><path d="M6 1a5 5 0 0 0-3 9v2h6v-2a5 5 0 0 0-3-9z" fill="#f5ec98" stroke="#8a8a4a"/><path d="M4 14h4" stroke="#666" stroke-width="1.500"/></svg><i class="lamp"></i><span>图层0000</span><i class="car lcar"></i></div>
      </div>
    </div>
  </div>
</main>
</body>
</html>
```

FILE: styles.css
```css
* { box-sizing: border-box; }
html, body { margin: 0; padding: 0; }
body {
  width: 1409px; height: 867px; overflow: hidden; background: #e1e4e8; color: #222;
  font: 14.67px/20px "Open Sans", "Noto Sans CJK SC", sans-serif;
  display: flex; flex-direction: column;
}
i, em, b { font-style: normal; font-weight: normal; display: block; }
svg { display: block; overflow: visible; }
p { margin: 0; }
.defs { position: absolute; width: 0; height: 0; }

.menubar { height: 34px; flex: none; display: flex; align-items: flex-end; padding: 7px 0 1px 2px; background: #e1e4e8; border-bottom: 1px solid #b7bbc0; }
.filebtn { width: 89px; height: 26px; margin-right: 5px; background: #2e5fb6; border: 1px solid #1d4a9e; box-shadow: inset 0 0 0 1px #4a78c8; color: #fff; text-align: center; line-height: 24px; }
.tab { padding: 0 12.35px; height: 26px; line-height: 26px; white-space: nowrap; color: #2b2b2b; }
.tab.lat { color: #2f4a6a; }
.tab-on { position: relative; width: 51px; padding: 0; text-align: center; background: #fff; border: 3px solid #ff8000; line-height: 20px; }

.badge { position: absolute; z-index: 5; width: 32px; height: 32px; border-radius: 50%; background: #0a84ff; color: #fff; font: bold 20px/32px "Liberation Sans", sans-serif; text-align: center; }
.b1 { left: 2px; top: 18px; }
.b2 { left: 4px; top: 37px; }
.b3 { left: 315px; top: -7px; }
.hl { position: absolute; border: 3px solid #ff8000; z-index: 4; pointer-events: none; }
.hl-sweep { left: 5px; top: -3px; width: 71px; height: 86px; }
.hl-row { left: 0; top: -9px; width: 315px; height: 38px; }

.ribbon { height: 119px; flex: none; display: flex; background: linear-gradient(#fff 70%, #fafafa); border-bottom: 2px solid #c6c9cd; }
.grp { display: flex; flex-direction: column; }
.g1 { width: 333px; padding-left: 9px; }
.g2 { width: 384px; padding-left: 4px; }
.g3 { width: 510px; padding-left: 4px; }
.g4 { flex: 1; padding: 3px 0 0 8px; }
.vsep { width: 1px; flex: none; margin: 6px 0 2px; background: #cfd2d6; }
.btns { display: flex; height: 82px; margin-top: 4px; flex: none; }
.rb { position: relative; height: 82px; display: flex; flex-direction: column; align-items: center; flex: none; white-space: nowrap; }
.ri { width: 46px; height: 44px; flex: none; }
.rb span:not(.badge) { height: 18px; line-height: 18px; }
.rb .car { position: absolute; top: 75px; left: 50%; margin-left: -4px; }
.w42 { width: 42px; } .w44 { width: 44px; } .w46 { width: 46px; } .w48 { width: 48px; } .w52 { width: 52px; }
.w58 { width: 58px; } .w60 { width: 60px; } .w76 { width: 76px; } .w88 { width: 88px; }
.car { width: 0; height: 0; border-left: 4px solid transparent; border-right: 4px solid transparent; border-top: 4px solid #444; flex: none; }
.gt { position: relative; margin-top: 7px; height: 20px; padding-right: 4px; text-align: center; color: #69727e; flex: none; }
.gt3 { padding-right: 22px; }
.launch { position: absolute; left: 490px; top: 1px; width: 11px; height: 11px; }
.srow { display: flex; align-items: center; height: 29px; white-space: nowrap; flex: none; }
.si { width: 22px; height: 22px; margin-right: 3px; flex: none; }
.sc1 { margin-left: 8px; }
.gt4 { margin-top: 3px; text-align: right; padding-right: 13px; }

.filterbar { height: 32px; flex: none; display: flex; align-items: center; padding-top: 3px; background: #e1e4e8; }
.grip { width: 2px; height: 22px; margin: 0 6px 0 4px; flex: none; background: repeating-linear-gradient(#7d8aa0 0 2px, transparent 2px 5px); }
.fsel { width: 27px; height: 26px; background: #ffe68a; border: 1px solid #c2a14a; display: flex; align-items: center; justify-content: center; flex: none; }
.fsel svg { width: 22px; height: 22px; }
.fc { flex: none; height: 26px; display: flex; align-items: center; justify-content: center; }
.fc svg { width: 22px; height: 22px; }
.w28 { width: 28px; } .w24 { width: 24px; }
.fcar { margin: 0 0 0 2px; border-top-color: #333; }
.dotc { margin-left: 5px; }
.tsep { width: 1px; height: 22px; background: #a9adb1; flex: none; }
.s1 { margin: 0 5px 0 4px; }
.s2 { margin: 0 4px 0 4px; }
.s3 { margin: 0 3px 0 4px; }
.field { position: relative; height: 26px; flex: none; background: #ebedef; color: #8b8f93; padding-left: 4px; line-height: 26px; }
.f1 { width: 117px; margin-left: 3px; margin-right: 5px; }
.f2 { width: 160px; margin-left: 1px; margin-right: 5px; }
.f3 { width: 120px; margin-left: 1px; }
.gcar { position: absolute; right: 4px; top: 11px; border-top-color: #b4b8bb; }
.tiny { font: bold 5px "Liberation Sans", sans-serif; fill: #8b9094; }

.work { flex: 1; min-height: 0; display: flex; }
.panel { width: 381px; flex: none; display: flex; flex-direction: column; background: #dfe3e8; border-right: 1px solid #c6cacf; }
.phead { height: 29px; flex: none; display: flex; align-items: center; padding: 0 9px 0 6px; border-bottom: 1px solid #c3c7cc; background: #e1e4e8; }
.ptitle { flex: 1; color: #444; }
.pi1 { width: 14px; height: 12px; margin-right: 9px; }
.pi2 { width: 16px; height: 12px; }
.pbody { flex: 1; display: flex; min-height: 0; }
.strip { width: 40px; flex: none; display: flex; flex-direction: column; background: #e1e4e8; border-right: 1px solid #c3c7cc; }
.st { height: 59.5px; display: flex; align-items: center; justify-content: center; margin-left: 2px; }
.st svg { width: 32px; height: 32px; }
.st.on { background: #fff; margin-right: -1px; height: 58px; border: 1px solid #d0d3d7; border-right: 0; border-bottom-color: #c3c7cc; }
.pcontent { flex: 1; padding: 3px 6px 0 5px; }
.ptools { display: flex; gap: 3px; height: 28px; margin: 0 -2px 5px; }
.tb { width: 32px; height: 28px; background: #fff; border: 1px solid #c8ccd0; display: flex; align-items: center; justify-content: center; }
.tb svg { width: 22px; height: 20px; }
.tb-info { margin-left: auto; }
.tb-info svg { width: 18px; height: 18px; }
.tb-nar { width: 17px; }
.tb-nar svg { width: 12px; height: 18px; }
.sec { border: 1px solid #c2c6cc; margin-bottom: 3px; }
.sh { height: 28px; background: #fff; display: flex; align-items: center; font-weight: bold; color: #333; padding-left: 4px; }
.tri { width: 0; height: 0; border-left: 5px solid transparent; border-right: 5px solid transparent; border-top: 9px solid #50565c; margin-right: 8px; }
.sb { padding: 7px 0 3px; display: flex; flex-direction: column; gap: 5px; background: #dde2e8; }
.sb2 { padding: 4px 0 4px; gap: 0; }
.row { position: relative; display: flex; align-items: center; height: 26px; }
.row label { width: 114px; padding-left: 9px; flex: none; }
.row label em { display: inline; color: #2b4a78; }
.inp { height: 26px; flex: none; position: relative; background: #fff; border: 1px solid #c4c8cc; padding-left: 2px; line-height: 24px; display: flex; }
.i147 { width: 147px; }
.i160 { width: 160px; }
.v { color: #2a3d55; }
.unit { margin-left: auto; margin-right: 19px; }
.spin { position: absolute; right: 5px; top: 5px; display: flex; flex-direction: column; gap: 6px; }
.spin i { width: 0; height: 0; border-left: 3px solid transparent; border-right: 3px solid transparent; }
.spin i:first-child { border-bottom: 4px solid #555; }
.spin i:last-child { border-top: 4px solid #555; }
.chev { width: 14px; height: 14px; margin-left: 8px; }
.gd { width: 18px; height: 18px; margin-left: 6px; }
.g-c { margin-left: 11px; }
.rc { margin-left: 7px; }
.crow { display: flex; align-items: center; height: 26px; padding-left: 8px; }
.cb { width: 16px; height: 16px; margin-right: 7px; border: 1px solid #8e949a; background: linear-gradient(135deg, #c2c8cf, #eceef1); padding: 1px; }
.cb svg { width: 12px; height: 12px; }
.dis .inp { background: #eceef0; color: #9a9ea2; }
.dis .v { color: #9a9ea2; }
.dis .spin i:first-child { border-bottom-color: #999; }
.dis .spin i:last-child { border-top-color: #999; }
.dis .rc { border-top-color: #b4b8bb; }
.dis { margin-top: 2px; }

.main { flex: 1; min-width: 0; display: flex; flex-direction: column; margin-left: 2px; }
.doctabs { height: 29px; flex: none; display: flex; align-items: flex-end; background: #e1e4e8; }
.doctab { width: 236px; height: 27px; display: flex; align-items: center; justify-content: center; gap: 8px; background: #fff; border: 1px solid #c3c7cc; border-bottom: 0; padding-left: 20px; color: #222; white-space: nowrap; }
.doctab svg { width: 11px; height: 11px; }
.plus { width: 13px; height: 13px; margin: 0 0 7px 8px; }
.view { flex: 1; position: relative; min-height: 0; background: linear-gradient(#ffffff, #a8a8a8); padding: 6px 0 0 22px; overflow: hidden; }
.scene { position: absolute; left: 0; top: 0; width: 1026px; height: 653px; }
.prompt { position: relative; line-height: 20px; color: #1f1f1f; letter-spacing: .2px; }
.lt { letter-spacing: .6px; }
.lt2 { margin-right: 5px; }
.sp-gray { fill: none; stroke: #7d96b0; stroke-opacity: .82; stroke-width: 15; stroke-linecap: round; }
.sp-blue { fill: none; stroke: #0a96ff; stroke-width: 2.6; stroke-linecap: round; }
.sp-blue2 { fill: none; stroke: #0a96ff; stroke-opacity: .55; stroke-width: 1.6; stroke-linecap: round; }
.sp-oup { fill: none; stroke: #ff9d00; stroke-width: 4.5; stroke-linecap: round; }
.sp-odn { fill: none; stroke: #f59a06; stroke-width: 2.6; stroke-linecap: round; }
.sp-dot { fill: none; stroke: #2e2204; stroke-width: 2; stroke-dasharray: 1 4; }
.sp-dot2 { fill: none; stroke: #3a2a08; stroke-width: 1; stroke-dasharray: 1 30; }
.ring { fill: none; stroke: #0a96ff; stroke-width: 1.2; }
.star { fill: none; stroke: #f01020; stroke-width: 1.6; stroke-dasharray: 2.500 1.500; }
.ax { font-family: "Liberation Sans", sans-serif; font-size: 24px; }
.ax-z { fill: #0000e6; }
.ax-y { fill: #39c439; font-size: 17px; }
.ax-x { fill: #f01818; }
.vbar { position: absolute; left: 202.5px; top: 3px; height: 26px; display: flex; align-items: center; }
.vc { height: 22px; flex: none; display: flex; align-items: center; justify-content: center; }
.vc svg { width: 20px; height: 20px; }
.w29 { width: 29px; } .w21 { width: 21px; }
.vcar { margin-left: 6px; border-top-color: #555; flex: none; }
.ml3 { margin-left: 3px; } .ml4 { margin-left: 4px; } .ml7 { margin-left: 7px; } .ml8 { margin-left: 8px; }
.ml8h { margin-left: 8.5px; } .ml9 { margin-left: 9px; } .ml10 { margin-left: 10px; }
.cswatch { height: 20px; width: 20px; flex: none; }
.black { height: 10px; background: #000; border: 1px solid #777; margin-left: 10.5px; }
.blue { background: #bfe6f6; border: 1px solid #301010; margin-left: 10px; }
.layer { width: 143px; height: 26px; margin-left: 5.5px; display: flex; align-items: center; padding: 0 7px 0 9px; background: #fff; border: 1px solid #bfc3c8; flex: none; }
.bulb { width: 12px; height: 16px; flex: none; }
.lamp { width: 14px; height: 14px; margin: 0 9px 0 4px; border-radius: 50%; background: radial-gradient(#ffee66, #e8c92c); border: 1px solid #8a9a5a; flex: none; }
.lcar { margin-left: auto; border-top-color: #444; }
.tn { font: bold 8px "Liberation Sans", sans-serif; fill: #c8202a; }
```
